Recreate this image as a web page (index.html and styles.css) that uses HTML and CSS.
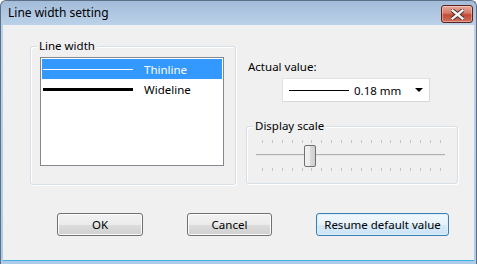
FILE: index.html
```html
<!DOCTYPE html>
<html lang="en">
<head>
    <meta charset="UTF-8">
    <title>Line width setting</title>
    <link rel="stylesheet" href="styles.css">
</head>
<body>
    <div class="window">
        <div class="titlebar">
            <span class="title">Line width setting</span>
            <button class="close" aria-label="Close">
                <svg width="13" height="11" viewBox="0 0 13 11">
                    <path d="M1.5 1.5 L11.5 9.5 M11.5 1.5 L1.5 9.5" stroke="#4a2a26" stroke-width="4.2" stroke-linecap="square"/>
                    <path d="M1.5 1.5 L11.5 9.5 M11.5 1.5 L1.5 9.5" stroke="#f4f4f4" stroke-width="2.4" stroke-linecap="square"/>
                </svg>
            </button>
        </div>

        <div class="client">
            <div class="panels">
                <div class="group group-width">
                    <span class="group-title">Line width</span>
                    <ul class="listbox">
                        <li class="item selected"><span class="sample thin"></span><span class="name">Thinline</span></li>
                        <li class="item"><span class="sample wide"></span><span class="name">Wideline</span></li>
                    </ul>
                </div>

                <div class="side">
                    <div class="field-label">Actual value:</div>
                    <div class="combo">
                        <span class="combo-line"></span>
                        <span class="combo-value">0.18 mm</span>
                        <span class="combo-arrow"></span>
                    </div>

                    <div class="group group-scale">
                        <span class="group-title">Display scale</span>
                        <div class="slider">
                            <div class="ticks">
                                <i></i><i></i><i></i><i></i><i></i><i></i><i></i><i></i><i></i><i></i>
                                <i></i><i></i><i></i><i></i><i></i><i></i><i></i><i></i><i></i>
                            </div>
                            <div class="track-area">
                                <div class="track"></div>
                                <div class="thumb"></div>
                            </div>
                            <div class="ticks">
                                <i></i><i></i><i></i><i></i><i></i><i></i><i></i><i></i><i></i><i></i>
                                <i></i><i></i><i></i><i></i><i></i><i></i><i></i><i></i><i></i>
                            </div>
                        </div>
                    </div>
                </div>
            </div>

            <div class="actions">
                <button class="btn btn-ok">OK</button>
                <button class="btn btn-cancel">Cancel</button>
                <button class="btn btn-default">Resume default value</button>
            </div>
        </div>
    </div>
</body>
</html>
```

FILE: styles.css
```css
body {
    margin: 0;
    padding: 0;
    font-family: "Noto Sans", "Open Sans", sans-serif;
    font-size: 11.5px;
    color: #000;
    background-color: #fff;
}
.window {
    width: 477px;
    height: 264px;
    box-sizing: border-box;
    display: flex;
    flex-direction: column;
    background: linear-gradient(to bottom, #a3bcd9 0, #bcd2ea 25px, #aecbea 100%);
    border: 1px solid #5d6f85;
    border-bottom: none;
    border-radius: 6px 6px 0 0;
    overflow: hidden;
}
.titlebar {
    height: 24px;
    display: flex;
    align-items: center;
    justify-content: space-between;
    padding: 0 3px 0 7px;
}
.title {
    font-size: 12px;
    line-height: 16px;
    margin-top: -1px;
}
.close {
    width: 32px;
    height: 18px;
    margin-top: 2px;
    padding: 0;
    border: 1px solid #5b2219;
    border-radius: 3px;
    background: linear-gradient(to bottom, #e9a99c 0, #d47867 45%, #c14a35 55%, #d0705c 100%);
    box-shadow: inset 0 0 0 1px rgba(255, 255, 255, 0.35);
    display: flex;
    align-items: center;
    justify-content: center;
}
.client {
    flex: 1;
    margin: 0 2px 3px 2px;
    background-color: #f0f0f0;
    border-bottom: 1px solid #3cb2df;
}
.panels {
    display: flex;
    gap: 10px;
    padding: 21px 0 0 27px;
}
.group {
    position: relative;
    box-sizing: border-box;
    border: 1px solid #d5dfe5;
    border-radius: 3px;
    box-shadow: inset 1px 1px 0 #fff, 1px 1px 0 #fff;
}
.group-title {
    position: absolute;
    top: -9px;
    left: 6px;
    padding: 0 2px;
    line-height: 16px;
    background-color: #f0f0f0;
}
.group-width {
    width: 206px;
    height: 139px;
    padding: 10px 0 0 9px;
}
.listbox {
    list-style: none;
    margin: 0;
    padding: 1px;
    width: 184px;
    height: 109px;
    box-sizing: border-box;
    background-color: #fff;
    border: 1px solid #828790;
}
.item {
    height: 20px;
    display: flex;
    align-items: center;
}
.item.selected {
    background-color: #3399ff;
    color: #fff;
}
.sample {
    width: 90px;
    margin: 0 11px 0 1px;
}
.sample.thin {
    height: 1px;
    background-color: #fff;
}
.sample.wide {
    height: 3px;
    background-color: #000;
}
.side {
    width: 212px;
    display: flex;
    flex-direction: column;
}
.field-label {
    margin: 13px 0 0 2px;
    line-height: 16px;
}
.combo {
    margin: 3px 0 0 36px;
    width: 148px;
    height: 24px;
    box-sizing: border-box;
    display: flex;
    align-items: center;
    background-color: #fff;
    border: 1px solid #e3e3e3;
    border-right-color: #d9d9d9;
    border-bottom-color: #d9d9d9;
}
.combo-line {
    width: 60px;
    height: 1px;
    margin: 0 5px 0 6px;
    background-color: #000;
}
.combo-value {
    flex: 1;
}
.combo-arrow {
    width: 0;
    height: 0;
    margin-right: 6px;
    border-left: 4px solid transparent;
    border-right: 4px solid transparent;
    border-top: 4px solid #000;
}
.group-scale {
    margin-top: 24px;
    width: 212px;
    height: 58px;
    padding: 13px 0 0 9px;
}
.slider {
    width: 189px;
}
.ticks {
    height: 4px;
    margin: 0 4px 0 6px;
    display: flex;
    justify-content: space-between;
}
.ticks i {
    width: 1px;
    height: 3px;
    background-color: #c4c4c4;
}
.ticks:last-child {
    align-items: flex-end;
}
.track-area {
    position: relative;
    height: 23px;
}
.track {
    position: absolute;
    left: 0;
    right: 0;
    top: 10px;
    height: 1px;
    background-color: #b0b0b0;
    border-bottom: 1px solid #e6e6e6;
}
.thumb {
    position: absolute;
    left: 48px;
    top: 1px;
    width: 10px;
    height: 20px;
    border: 1px solid #707070;
    border-radius: 2px;
    background: linear-gradient(to right, #f2f2f2 0, #ebebeb 50%, #dcdcdc 50%, #cfcfcf 100%);
}
.actions {
    display: flex;
    gap: 44px;
    padding: 28px 0 0 54px;
}
.btn {
    height: 23px;
    padding: 0;
    font-family: inherit;
    font-size: 11.5px;
    color: #000;
    border: 1px solid #707070;
    border-radius: 3px;
    background: linear-gradient(to bottom, #f2f2f2 0, #ebebeb 50%, #dddddd 50%, #cfcfcf 100%);
    box-shadow: inset 0 0 0 1px #fcfcfc;
}
.btn-ok {
    width: 86px;
}
.btn-cancel {
    width: 85px;
}
.btn-default {
    width: 133px;
    border-color: #3c7fb1;
    background: linear-gradient(to bottom, #f1f8fd 0, #e6f2fb 50%, #d6eaf8 50%, #cde4f5 100%);
    box-shadow: inset 0 0 0 1px #d9effb;
}
```
